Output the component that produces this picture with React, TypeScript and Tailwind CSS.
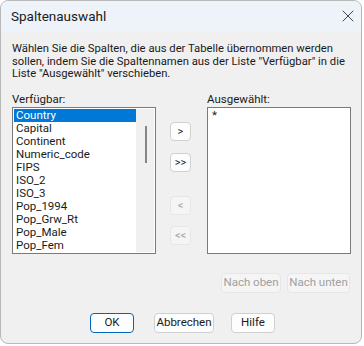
import { X } from 'lucide-react';

const available = [
  'Country',
  'Capital',
  'Continent',
  'Numeric_code',
  'FIPS',
  'ISO_2',
  'ISO_3',
  'Pop_1994',
  'Pop_Grw_Rt',
  'Pop_Male',
  'Pop_Fem',
];

function SmallButton({ label, disabled }: { label: string; disabled?: boolean }) {
  return (
    <div
      className={
        disabled
          ? 'w-[21px] h-[19px] flex items-center justify-center rounded-[4px] border border-[#e6e6e6] bg-[#f5f5f5] text-[#a8a8a8] text-[11px] leading-none whitespace-nowrap'
          : 'w-[21px] h-[19px] flex items-center justify-center rounded-[4px] border border-[#d0d0d0] bg-[#fdfdfd] text-[#1a1a1a] text-[11px] leading-none whitespace-nowrap'
      }
    >
      {label}
    </div>
  );
}

export default function App() {
  return (
    <div className="w-[364px] h-[346px] bg-white" style={{ fontFamily: 'Roboto, "Liberation Sans", sans-serif' }}>
      <div className="w-[362px] h-[344px] rounded-[8px] border border-[#b8b8b8] overflow-hidden flex flex-col bg-[#f0f0f0]">
        <div className="h-[30px] shrink-0 bg-[#eef3f9] flex items-center justify-between pl-[10px] pr-[3px]">
          <span className="text-[13.5px] text-[#1a1a1a]">Spaltenauswahl</span>
          <X size={20} strokeWidth={1} className="text-[#222]" />
        </div>
        <div className="flex-1 px-[11px] pt-[12px]">
          <p className="text-[11.25px] leading-[12.5px] text-[#1a1a1a] whitespace-nowrap">
            Wählen Sie die Spalten, die aus der Tabelle übernommen werden
            <br />
            sollen, indem Sie die Spaltennamen aus der Liste "Verfügbar" in die
            <br />
            Liste "Ausgewählt" verschieben.
          </p>
          <div className="flex mt-[11px]">
            <div className="flex flex-col">
              <span className="text-[11.5px] leading-[14px] text-[#1a1a1a] mb-[1px]">Verfügbar:</span>
              <div className="w-[144px] h-[147px] border border-[#7a7a7a] bg-white flex p-[1px]">
                <div className="flex-1 flex flex-col">
                  {available.map((item, idx) => (
                    <div
                      key={item}
                      className={
                        idx === 0
                          ? 'h-[13px] bg-[#0078d7] text-white text-[11.5px] leading-[13px] pl-[2px] whitespace-nowrap'
                          : 'h-[13px] text-[#1a1a1a] text-[11.5px] leading-[13px] pl-[2px] whitespace-nowrap'
                      }
                    >
                      {item}
                    </div>
                  ))}
                </div>
                <div className="w-[18px] bg-[#f0f0f0] flex justify-center pt-[17px]">
                  <div className="w-[2px] h-[37px] bg-[#858585] ml-[2px]" />
                </div>
              </div>
            </div>
            <div className="flex flex-col ml-[14px] mt-[30px]">
              <SmallButton label=">" />
              <div className="mt-[12px]">
                <SmallButton label=">>" />
              </div>
              <div className="mt-[24px]">
                <SmallButton label="<" disabled />
              </div>
              <div className="mt-[11px]">
                <SmallButton label="<<" disabled />
              </div>
            </div>
            <div className="flex flex-col ml-[16px]">
              <span className="text-[11.5px] leading-[14px] text-[#1a1a1a] mb-[1px]">Ausgewählt:</span>
              <div className="w-[144px] h-[147px] border border-[#7a7a7a] bg-white px-[4px] pt-[1px] text-[11.5px] leading-[13px] text-[#1a1a1a]">
                *
              </div>
            </div>
          </div>
          <div className="flex justify-end gap-[6px] mt-[19px]">
            <div className="w-[60px] h-[20px] flex items-center justify-center rounded-[4px] border border-[#e6e6e6] bg-[#f5f5f5] text-[#a0a0a0] text-[11.5px] whitespace-nowrap">
              Nach oben
            </div>
            <div className="w-[63px] h-[20px] flex items-center justify-center rounded-[4px] border border-[#e6e6e6] bg-[#f5f5f5] text-[#a0a0a0] text-[11.5px] whitespace-nowrap">
              Nach unten
            </div>
          </div>
          <div className="flex mt-[20px] pl-[78px]">
            <div className="w-[44px] h-[20px] flex items-center justify-center rounded-[4px] border border-[#0067c0] bg-[#fdfdfd] text-[#1a1a1a] text-[11.5px]">
              OK
            </div>
            <div className="w-[60px] h-[20px] ml-[20px] flex items-center justify-center rounded-[4px] border border-[#d0d0d0] bg-[#fdfdfd] text-[#1a1a1a] text-[11.5px] whitespace-nowrap">
              Abbrechen
            </div>
            <div className="w-[44px] h-[20px] ml-[17px] flex items-center justify-center rounded-[4px] border border-[#d0d0d0] bg-[#fdfdfd] text-[#1a1a1a] text-[11.5px]">
              Hilfe
            </div>
          </div>
        </div>
      </div>
    </div>
  );
}
